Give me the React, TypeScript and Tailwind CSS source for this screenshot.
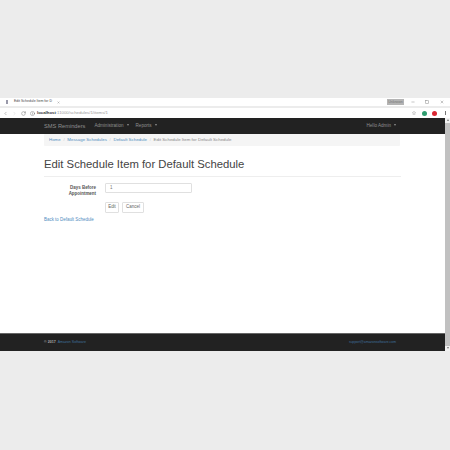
import { ChevronLeft, ChevronRight, Info, Minus, RotateCw, Square, Star, X } from "lucide-react";

const crumbs = ["Home", "Message Schedules", "Default Schedule"];

function Caret() {
  return <span className="ml-[3px] inline-block border-x-[1.5px] border-t-[2px] border-x-transparent border-t-current align-middle" />;
}

function BrowserChrome() {
  return (
    <div className="shrink-0">
      <div className="flex h-[10px] items-start bg-[#ececec]">
        <div className="flex h-[8px] w-full items-center bg-white">
          <div className="flex h-[8px] w-[62px] items-center pl-[6px] text-[#444]">
            <span className="mr-[6px] h-[4px] w-[2px] bg-[#99a]" />
            <span className="text-[3.5px] leading-none">Edit Schedule Item for D</span>
            <X size={3} className="ml-auto mr-[2px] text-[#555]" />
          </div>
          <div className="ml-auto mr-[6px] flex items-center">
            <div className="h-[6px] w-[17px] bg-[#b4b4b4] text-center text-[3.5px] leading-[6px] text-[#777]">Unknown</div>
            <Minus size={4} className="ml-[7px] text-[#555]" />
            <Square size={4} className="ml-[10px] text-[#555]" />
            <X size={4} className="ml-[11px] text-[#555]" />
          </div>
        </div>
      </div>
      <div className="flex h-[10px] items-center bg-white pl-[3px] pr-[4px] text-[#666]">
        <ChevronLeft size={5} />
        <ChevronRight size={5} className="ml-[4px] text-[#ccc]" />
        <RotateCw size={5} className="ml-[4px]" />
        <Info size={5} className="ml-[4px]" />
        <span className="ml-[2px] text-[4.3px] leading-none text-[#999]">
          <span className="font-bold text-[#333]">localhost</span>:11000/schedules/1/items/1
        </span>
        <Star size={4} className="ml-auto text-[#777]" />
        <span className="ml-[6px] h-[5px] w-[5px] rounded-full bg-[#2e9d6f]" />
        <span className="ml-[5px] h-[5px] w-[5px] rounded-full bg-[#d92632]" />
        <span className="ml-[8px] h-[4px] w-px bg-[#777]" />
      </div>
    </div>
  );
}

function Navbar() {
  return (
    <nav className="flex h-[16px] items-center bg-[#222222] pl-[44px] pr-[49px] text-[4.6px] text-[#8f8f8f]">
      <span className="text-[5.7px]">SMS Reminders</span>
      <span className="ml-[9px]">Administration<Caret /></span>
      <span className="ml-[7px]">Reports<Caret /></span>
      <span className="ml-auto">Hello Admin<Caret /></span>
    </nav>
  );
}

export default function App() {
  return (
    <div className="flex h-[450px] w-[450px] flex-col overflow-hidden bg-[#ececec] font-['Liberation_Sans',sans-serif]">
      <div className="h-[98px] shrink-0" />
      <BrowserChrome />
      <div className="flex h-[233px] shrink-0">
        <div className="flex min-w-0 flex-1 flex-col bg-white">
          <Navbar />
          <main className="flex-1 px-[44px]">
            <div className="flex h-[12px] w-[356px] items-center rounded-[1px] bg-[#f5f5f5] px-[5px] text-[4.4px] text-[#4f8cc0]">
              {crumbs.map((c) => (
                <span key={c} className="flex items-center">
                  {c}
                  <span className="mx-[2.7px] text-[#ccc]">/</span>
                </span>
              ))}
              <span className="text-[#888]">Edit Schedule Item for Default Schedule</span>
            </div>
            <h1 className="mt-[11px] border-b border-[#eeeeee] pb-[5px] text-[11.3px] leading-[14px] text-[#444]">
              Edit Schedule Item for Default Schedule
            </h1>
            <form className="mt-[6px]">
              <div className="flex">
                <label className="w-[52px] pt-[2px] text-right text-[4.45px] font-bold leading-[6px] text-[#555]">
                  Days Before Appointment
                </label>
                <div className="ml-[9px] flex h-[10px] w-[87px] items-center rounded-[1px] border border-[#e0e0e0] bg-white px-[4px] text-[4.45px] text-[#777]">
                  1
                </div>
              </div>
              <div className="ml-[61px] mt-[5px] flex gap-[3px]">
                <button type="button" className="h-[11px] w-[14px] rounded-[1px] border border-[#e0e0e0] bg-white text-[4.45px] text-[#666]">Edit</button>
                <button type="button" className="h-[11px] w-[22px] rounded-[1px] border border-[#e0e0e0] bg-white text-[4.45px] text-[#666]">Cancel</button>
              </div>
            </form>
            <a className="mt-[4px] block text-[4.45px] text-[#4f8cc0]">Back to Default Schedule</a>
          </main>
          <footer className="flex h-[18px] shrink-0 items-center border-t border-[#666] bg-[#222222] pl-[44px] pr-[49px] text-[3.6px]">
            <span className="font-bold text-[#aaa]">© 2017</span>
            <a className="ml-[2px] text-[#3f6f9c]">Amazon Software</a>
            <a className="ml-auto text-[3.4px] text-[#3f6f9c]">support@amazonsoftware.com</a>
          </footer>
        </div>
        <div className="flex w-[5px] shrink-0 flex-col items-center bg-[#f1f1f1]">
          <span className="mt-[1px] h-0 w-0 border-x-[1.5px] border-b-[2px] border-x-transparent border-b-[#777]" />
          <div className="mt-[2px] h-[223px] w-full bg-[#c1c1c1]" />
          <span className="mt-[1px] h-0 w-0 border-x-[1.5px] border-t-[2px] border-x-transparent border-t-[#777]" />
        </div>
      </div>
    </div>
  );
}
